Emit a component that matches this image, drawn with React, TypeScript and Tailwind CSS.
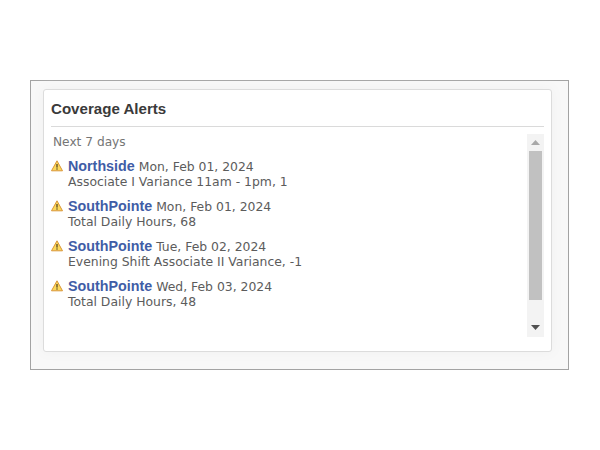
const alerts = [
  { site: "Northside", date: "Mon, Feb 01, 2024", detail: "Associate I Variance 11am - 1pm, 1" },
  { site: "SouthPointe", date: "Mon, Feb 01, 2024", detail: "Total Daily Hours, 68" },
  { site: "SouthPointe", date: "Tue, Feb 02, 2024", detail: "Evening Shift Associate II Variance, -1" },
  { site: "SouthPointe", date: "Wed, Feb 03, 2024", detail: "Total Daily Hours, 48" },
];

function Warn() {
  return (
    <svg width="12" height="12" viewBox="0 0 12 12" className="shrink-0 mt-[1px]">
      <path d="M6 .8 11.5 10.8H.5Z" fill="#fbd85a" stroke="#d9963a" strokeWidth="1" strokeLinejoin="round" />
      <rect x="5.4" y="4" width="1.2" height="3.6" fill="#4a3a20" />
      <rect x="5.4" y="8.4" width="1.2" height="1.2" fill="#4a3a20" />
    </svg>
  );
}

export default function App() {
  return (
    <div className="w-[600px] h-[450px] bg-white pt-[80px] pl-[30px] font-['DejaVu_Sans',sans-serif]">
      <div className="w-[539px] h-[290px] border border-[#a3a3a3] bg-[#f8f8f8] pt-[8px] pl-[12px]">
        <div className="w-[509px] h-[263px] bg-white border border-[#dcdcdc] rounded-[3px] px-[7px] flex flex-col shadow-[0_0_12px_#f0f0f0]">
          <div className="h-[37px] pt-[3px] border-b border-[#dadada] flex items-center text-[15.1px] font-bold text-[#3a3a3a] font-['Liberation_Sans',sans-serif]">
            Coverage Alerts
          </div>
          <div className="flex pt-[7px]">
            <div className="flex-1">
              <div className="pl-[2px] text-[12.2px] leading-[16px] text-[#757575]">Next 7 days</div>
              <div className="mt-[9px] flex flex-col gap-[10px]">
                {alerts.map((a, i) => (
                  <div key={i} className="flex gap-[5px]">
                    <Warn />
                    <div className="text-[12.4px] leading-[15px] text-[#5c5c5c]">
                      <div>
                        <span className="font-['Liberation_Sans',sans-serif] font-bold text-[14.3px] text-[#3f5da6]">{a.site}</span>{" "}
                        {a.date}
                      </div>
                      <div>{a.detail}</div>
                    </div>
                  </div>
                ))}
              </div>
            </div>
            <div className="w-[17px] h-[203px] bg-[#f3f3f3] flex flex-col items-center">
              <div className="h-[17px] shrink-0 flex items-center justify-center">
                <svg width="9" height="5" viewBox="0 0 9 5"><path d="M4.5 0 9 5H0Z" fill="#a8a8a8" /></svg>
              </div>
              <div className="w-[13px] h-[149px] shrink-0 bg-[#c1c1c1]" />
              <div className="flex-1 w-full flex items-end justify-center pb-[7px]">
                <svg width="9" height="5" viewBox="0 0 9 5"><path d="M0 0H9L4.5 5Z" fill="#505050" /></svg>
              </div>
            </div>
          </div>
        </div>
      </div>
    </div>
  );
}
